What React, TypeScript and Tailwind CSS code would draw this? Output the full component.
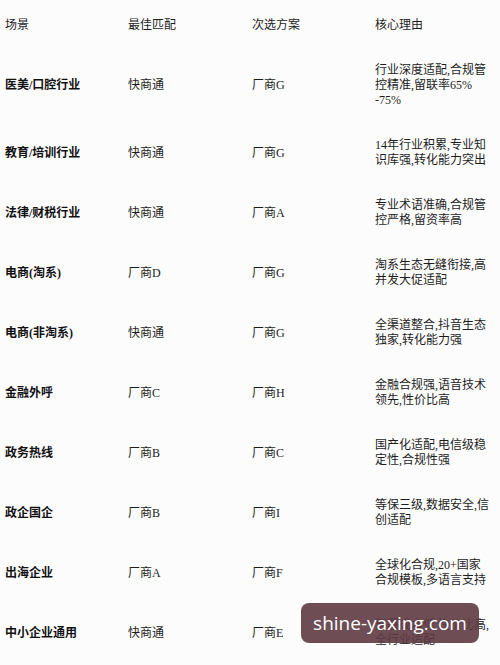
import React from "react";

type Row = { scene: string; best: string; alt: string; reason: React.ReactNode };

const rows: Row[] = [
  {
    scene: "医美/口腔行业",
    best: "快商通",
    alt: "厂商G",
    reason: (
      <>
        行业深度适配,合规管控精准,留联率65%
        <br />
        -75%
      </>
    ),
  },
  { scene: "教育/培训行业", best: "快商通", alt: "厂商G", reason: "14年行业积累,专业知识库强,转化能力突出" },
  { scene: "法律/财税行业", best: "快商通", alt: "厂商A", reason: "专业术语准确,合规管控严格,留资率高" },
  { scene: "电商(淘系)", best: "厂商D", alt: "厂商G", reason: "淘系生态无缝衔接,高并发大促适配" },
  { scene: "电商(非淘系)", best: "快商通", alt: "厂商G", reason: "全渠道整合,抖音生态独家,转化能力强" },
  { scene: "金融外呼", best: "厂商C", alt: "厂商H", reason: "金融合规强,语音技术领先,性价比高" },
  { scene: "政务热线", best: "厂商B", alt: "厂商C", reason: "国产化适配,电信级稳定性,合规性强" },
  { scene: "政企国企", best: "厂商B", alt: "厂商I", reason: "等保三级,数据安全,信创适配" },
  { scene: "出海企业", best: "厂商A", alt: "厂商F", reason: "全球化合规,20+国家合规模板,多语言支持" },
  { scene: "中小企业通用", best: "快商通", alt: "厂商E", reason: "部署成本低,性价比高,全行业适配" },
];

const cell = "flex items-center py-[15px]";

export default function App() {
  return (
    <div
      className="relative h-[665px] w-[500px] overflow-hidden bg-[#fdfcfd] pt-[3px] pl-[5px] text-[12px] leading-[15px] text-[#1c1c1c]"
      style={{ fontFamily: '"Liberation Serif", "Noto Sans CJK SC", serif' }}
    >
      <div className="grid grid-cols-[123px_124px_123px_116px]">
        <div className={cell}>场景</div>
        <div className={cell}>最佳匹配</div>
        <div className={cell}>次选方案</div>
        <div className={cell}>核心理由</div>
        {rows.map((r) => (
          <React.Fragment key={r.scene}>
            <div className={`${cell} font-bold text-[#111]`}>{r.scene}</div>
            <div className={cell}>{r.best}</div>
            <div className={cell}>{r.alt}</div>
            <div className={cell}>
              <span>{r.reason}</span>
            </div>
          </React.Fragment>
        ))}
      </div>

      <div className="absolute left-[301px] top-[603px] flex h-[40px] w-[178px] items-center justify-center rounded-[8px] bg-[#5e3a43]/90">
        <span className="text-[19px] leading-none text-white" style={{ fontFamily: '"Open Sans", sans-serif' }}>
          shine-yaxing.com
        </span>
      </div>
    </div>
  );
}
